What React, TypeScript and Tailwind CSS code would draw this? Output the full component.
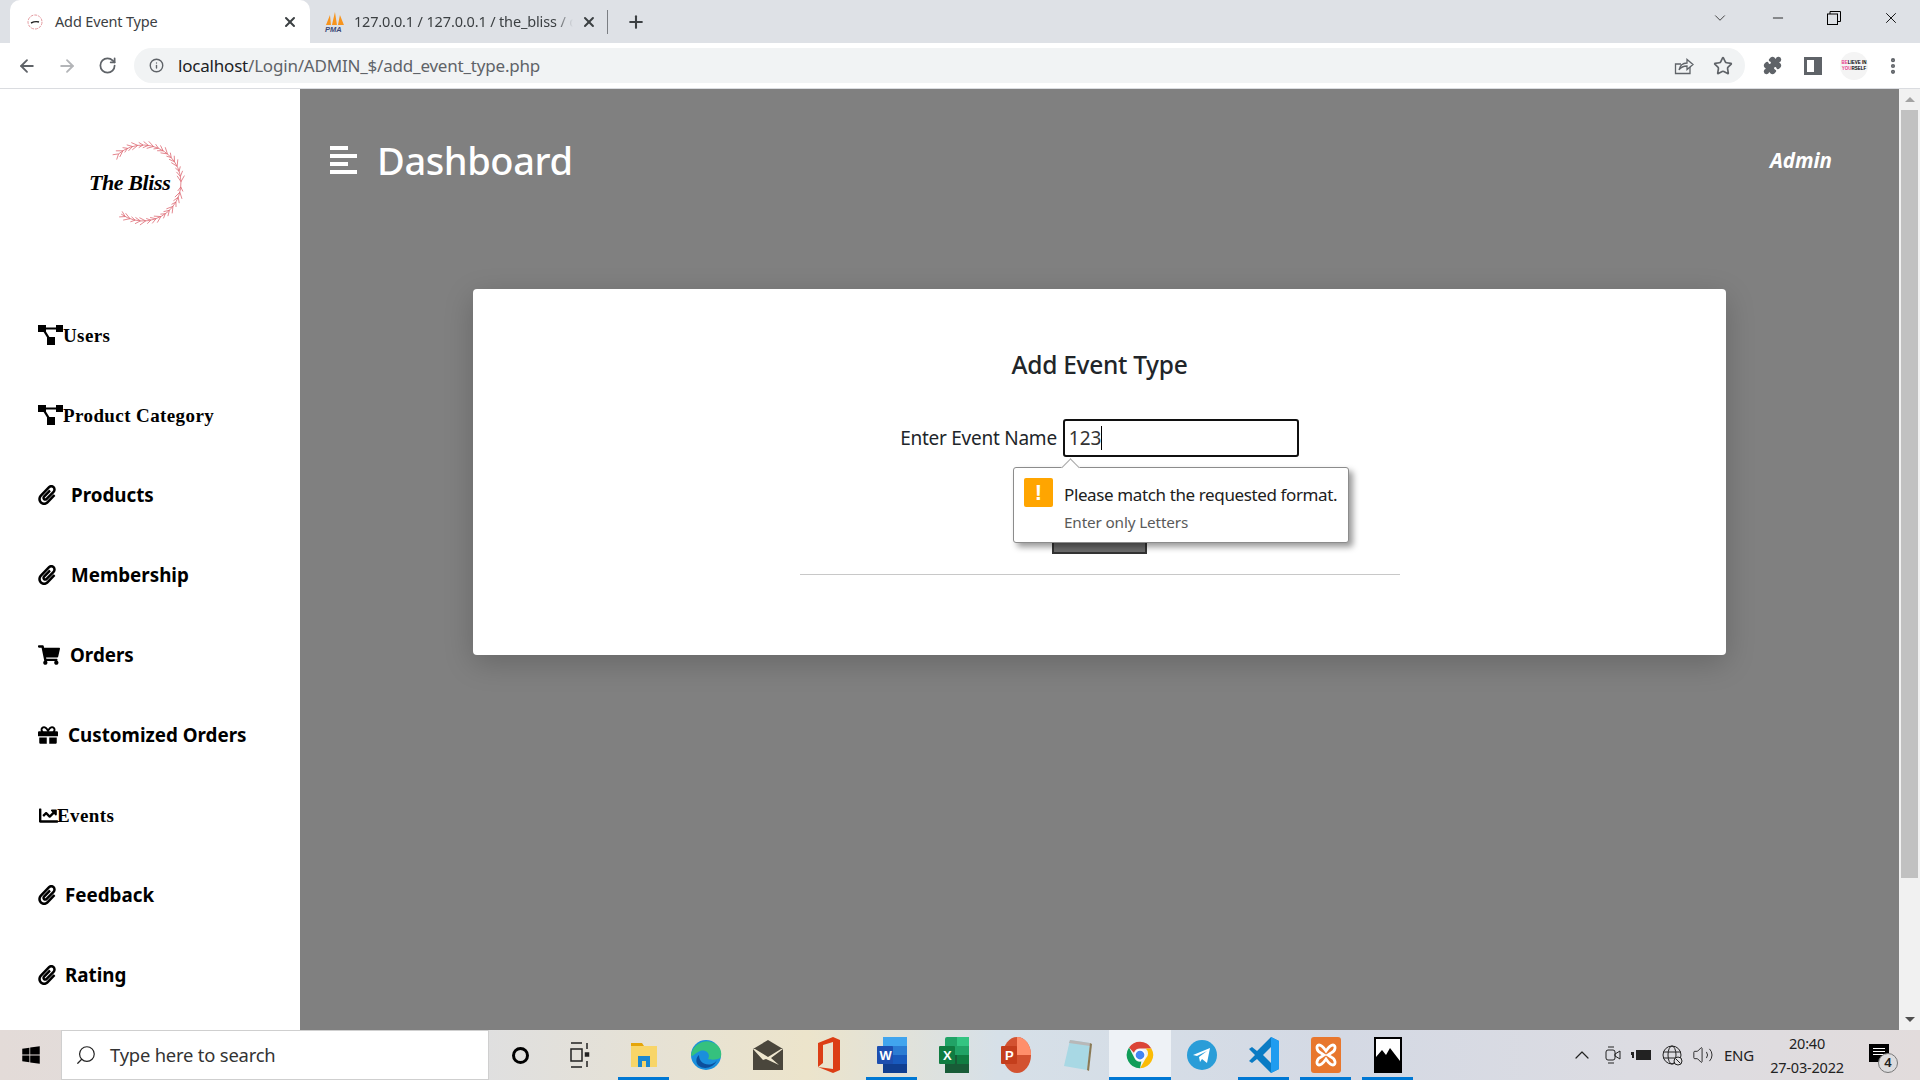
import React from 'react';
import { ArrowLeft, ArrowRight, RotateCw, Info, Star, Plus, X, ChevronDown, ChevronUp, Minus, Search, Puzzle, EllipsisVertical, Volume2 } from 'lucide-react';
import { FaPaperclip, FaShoppingCart, FaGift, FaChartLine, FaWindows } from 'react-icons/fa';

const Sitemap = () => (
  <svg width="26" height="20" viewBox="0 0 26 20" fill="black">
    <rect x="0" y="0" width="8" height="7" />
    <rect x="18" y="0" width="7" height="7" />
    <rect x="9" y="12" width="8" height="8" />
    <path d="M7 2.5h12v2H7zM5 6l2-1 5 8-2 1z" />
  </svg>
);

const Clip = () => <FaPaperclip className="w-[18px] h-[20px] text-black" />;

const serifText = "font-['Liberation_Serif',serif] text-[19px] font-bold tracking-[0.4px] mt-[2px]";

const navItems = [
  { label: 'Users', icon: <Sitemap />, text: serifText, gap: '-ml-px' },
  { label: 'Product Category', icon: <Sitemap />, text: serifText, gap: '-ml-px' },
  { label: 'Products', icon: <Clip />, text: 'text-[18.8px] font-bold', gap: 'ml-[15px]' },
  { label: 'Membership', icon: <Clip />, text: 'text-[18.8px] font-bold', gap: 'ml-[15px]' },
  { label: 'Orders', icon: <FaShoppingCart className="w-[22px] h-[20px] text-black" />, text: 'text-[18.8px] font-bold', gap: 'ml-[10px]' },
  { label: 'Customized Orders', icon: <FaGift className="w-[20px] h-[20px] text-black" />, text: 'text-[18.8px] font-bold', gap: 'ml-[10px]' },
  { label: 'Events', icon: <FaChartLine className="w-[21px] h-[19px] text-black" />, text: serifText, gap: '-ml-[2px]' },
  { label: 'Feedback', icon: <Clip />, text: 'text-[18.8px] font-bold', gap: 'ml-[9px]' },
  { label: 'Rating', icon: <Clip />, text: 'text-[18.8px] font-bold', gap: 'ml-[9px]' },
];

const Wreath = () => {
  const cx = 45, cy = 45, r = 38;
  const leaves = [];
  for (let a = -130; a <= 125; a += 8) {
    const rad = a * Math.PI / 180;
    const x = cx + r * Math.cos(rad);
    const y = cy + r * Math.sin(rad);
    // leaves lean toward the top of the wreath on the upper half, the bottom on the lower half
    const dir = a < 0 ? -1 : 1;
    for (const s of [-1, 1]) {
      const t = rad + dir * Math.PI / 2 + s * 0.55;
      const len = 5 + (Math.abs(a) % 3);
      leaves.push(<line key={`${a}${s}`} x1={x} y1={y} x2={x + len * Math.cos(t)} y2={y + len * Math.sin(t)} />);
    }
  }
  const p1 = [cx + r * Math.cos(-130 * Math.PI / 180), cy + r * Math.sin(-130 * Math.PI / 180)];
  const p2 = [cx + r * Math.cos(125 * Math.PI / 180), cy + r * Math.sin(125 * Math.PI / 180)];
  return (
    <svg width="90" height="90" viewBox="0 0 90 90" fill="none" stroke="#dd6a74" strokeWidth="0.8">
      <path d={`M${p1[0]} ${p1[1]}A${r} ${r} 0 1 1 ${p2[0]} ${p2[1]}`} />
      {leaves}
    </svg>
  );
};

const Logo = () => (
  <div className="relative w-[100px] h-[92px] ml-[89px]">
    <div className="absolute left-[9px] top-0"><Wreath /></div>
    <span className="absolute left-0 top-[27px] font-['Liberation_Serif',serif] italic font-bold text-[22px] leading-[36px] text-black whitespace-nowrap tracking-[-0.4px]">The Bliss</span>
  </div>
);

const PmaIcon = () => (
  <svg width="22" height="22" viewBox="0 0 22 22">
    <path d="M2 14L6 4l1 10zM8 14l3-13 2 13zM14 14l2-10 4 10z" fill="#f7941d" />
    <text x="1" y="21" fontSize="7.5" fontWeight="700" fontStyle="italic" fill="#3b4a78" fontFamily="Liberation Sans">PMA</text>
  </svg>
);

const TabFav = () => (
  <svg width="18" height="18" viewBox="0 0 18 18" fill="none">
    <circle cx="9" cy="9" r="7" stroke="#e49a9f" strokeWidth="1" strokeDasharray="3 1" />
    <path d="M5 10c2-1 5-2 8-1" stroke="#222" strokeWidth="1.4" />
  </svg>
);

const ShareIcon = () => (
  <svg width="20" height="20" viewBox="0 0 20 20" fill="none" stroke="#5f6368" strokeWidth="1.3">
    <path d="M16 11v6.5H1.5V8H7" />
    <path d="M5 14c1-5 4-7 8-7V3.5l6 5-6 5V10c-3 0-6 1-8 4z" />
  </svg>
);

const Panel = () => (
  <div className="w-[18px] h-[18px] bg-[#5f6368] flex justify-start p-[3px_8px_3px_3px]">
    <div className="w-full h-full bg-white" />
  </div>
);

const Restore = () => (
  <svg width="14" height="14" viewBox="0 0 14 14" fill="none" stroke="black" strokeWidth="1">
    <rect x="0.5" y="3" width="10" height="10.5" />
    <path d="M3 3V0.5h10.5v10H11" />
  </svg>
);

const TabBar = () => (
  <div className="h-[43px] bg-[#dee1e6] flex items-end text-[14px] text-[#3c4043] shrink-0">
    <div className="w-[10px]" />
    <div className="w-[300px] h-[43px] bg-white rounded-t-[10px] flex items-center">
      <div className="w-[45px] pl-[16px] flex"><TabFav /></div>
      <span className="flex-1 text-[14.500px] tracking-[-0.15px]">Add Event Type</span>
      <X className="w-[16px] h-[16px] text-[#3c4043] mr-[12px]" strokeWidth={3} />
    </div>
    <div className="w-[298px] h-[43px] flex items-center pl-[14px]">
      <PmaIcon />
      <span className="ml-[8px] w-[220px] overflow-hidden whitespace-nowrap text-[14.500px] tracking-[-0.15px] [mask-image:linear-gradient(90deg,black_92%,transparent)]">127.0.0.1 / 127.0.0.1 / the_bliss / c</span>
      <X className="w-[16px] h-[16px] text-[#3c4043] ml-[8px]" strokeWidth={3} />
      <div className="w-px h-[24px] bg-[#7b7e83] ml-[10px]" />
    </div>
    <div className="h-[43px] flex items-center ml-[18px]">
      <Plus className="w-[20px] h-[20px] text-[#3c4043]" strokeWidth={2.5} />
    </div>
    <div className="flex-1" />
    <div className="h-[36px] flex items-center self-start">
      <ChevronDown className="w-[18px] h-[18px] text-[#333] mr-[41px]" strokeWidth={1.2} />
      <Minus className="w-[16px] h-[16px] text-black mr-[41px]" strokeWidth={1.2} />
      <Restore />
      <X className="w-[18px] h-[18px] text-black ml-[41px] mr-[20px]" strokeWidth={1.2} />
    </div>
  </div>
);

const Toolbar = () => (
  <div className="h-[46px] bg-white border-b border-[#dadce0] flex items-center shrink-0">
    <ArrowLeft className="w-[20px] h-[20px] text-[#5f6368] ml-[17px]" strokeWidth={2.2} />
    <ArrowRight className="w-[20px] h-[20px] text-[#b3b5b8] ml-[20px]" strokeWidth={2.2} />
    <RotateCw className="w-[19px] h-[19px] text-[#5f6368] ml-[21px]" strokeWidth={2.2} />
    <div className="ml-[17px] w-[1611px] h-[35px] rounded-full bg-[#f1f3f4] flex items-center">
      <Info className="w-[15px] h-[15px] text-[#5f6368] ml-[15px]" strokeWidth={2.2} />
      <span className="ml-[14px] text-[17px] text-[#5f6368] tracking-[-0.2px]"><span className="text-[#202124]">localhost</span>/Login/ADMIN_$/add_event_type.php</span>
      <div className="flex-1" />
      <ShareIcon />
      <Star className="w-[20px] h-[20px] text-[#5f6368] ml-[19px] mr-[12px]" strokeWidth={2} />
    </div>
    <ExtensionIcon />
    <div className="ml-[22px]"><Panel /></div>
    <div className="ml-[18px] w-[28px] h-[28px] rounded-full bg-[#f4f4f4] flex items-center justify-center">
      <span className="font-['Liberation_Sans',sans-serif] text-[4.500px] leading-[6px] font-bold text-black whitespace-nowrap text-center"><span className="text-[#e8408f]">BE</span>LIEVE IN<br /><span className="text-[#e8408f]">YOU</span>RSELF</span>
    </div>
    <EllipsisVertical className="w-[20px] h-[20px] text-[#5f6368] ml-[15px]" strokeWidth={3} />
  </div>
);

const ExtensionIcon = () => <Puzzle className="w-[19px] h-[19px] text-[#5f6368] fill-[#5f6368] ml-[18px]" />;

const Sidebar = () => (
  <div className="w-[300px] bg-white flex flex-col shrink-0">
    <div className="h-[206px] pt-[49px]"><Logo /></div>
    {navItems.map((item, index) => (
      <div key={index} className="h-[80px] flex items-center pl-[38px] text-black">
        {item.icon}
        <span className={`${item.gap} ${item.text}`}>{item.label}</span>
      </div>
    ))}
  </div>
);

const ValidationBubble = () => (
  <div className="absolute left-[540px] top-[178px] w-[336px] h-[76px] bg-white border border-[#8c8c8c] rounded-[3px] shadow-[4px_4px_6px_rgba(0,0,0,0.4)] flex">
    <div className="absolute left-[50px] -top-[7px] w-[13px] h-[13px] bg-white border-l border-t border-[#a8a8a8] rotate-45" />
    <div className="ml-[10px] mt-[10px] w-[29px] h-[29px] bg-[#ffa500] rounded-[2px] flex items-center justify-center text-white font-bold text-[22px] font-['Liberation_Sans',sans-serif]">!</div>
    <div className="ml-[11px] flex flex-col">
      <span className="mt-[14px] text-[17px] leading-[26px] text-[#202020] tracking-[-0.38px] whitespace-nowrap">Please match the requested format.</span>
      <span className="mt-[4px] text-[15.300px] leading-[20px] text-[#5a5a5a] tracking-[-0.15px]">Enter only Letters</span>
    </div>
  </div>
);

const Main = () => (
  <div className="flex-1 bg-[#808080] flex flex-col text-white">
    <div className="h-[200px] flex items-start">
      <svg className="ml-[30px] mt-[57px]" width="27" height="28" viewBox="0 0 27 28" fill="white">
        <rect x="0" y="0" width="18" height="4" />
        <rect x="0" y="8" width="27" height="4" />
        <rect x="0" y="16" width="18" height="4" />
        <rect x="0" y="24" width="27" height="4" />
      </svg>
      <h1 className="ml-[20px] mt-[46px] text-[38px] leading-[50px] font-medium tracking-[-0.4px]">Dashboard</h1>
      <div className="flex-1" />
      <span className="mt-[58px] mr-[67px] text-[20.500px] leading-[27px] font-bold italic">Admin</span>
    </div>
    <div className="relative mx-[173px] h-[366px] bg-white rounded-[4px] shadow-[0_8px_30px_rgba(0,0,0,0.2)] flex flex-col items-center pt-[58px] text-[#212529]">
      <h2 className="h-[36px] text-[24.500px] leading-[36px] font-medium tracking-[-0.3px]">Add Event Type</h2>
      <div className="mt-[36px] flex items-center">
        <label className="text-[19px] tracking-[-0.25px] mr-[6px] mt-[1px]">Enter Event Name</label>
        <div className="w-[236px] h-[38px] border-2 border-[#101010] rounded-[3px] flex items-center pl-[4px] text-[19px] text-[#333]">
          123<span className="w-px h-[24px] bg-black" />
        </div>
      </div>
      <div className="mt-[59px] w-[95px] h-[38px] bg-[#6c6c6c] border-2 border-[#333]" />
      <div className="mt-[20px] w-[600px] h-px bg-[#c8c8c8]" />
      <ValidationBubble />
    </div>
  </div>
);

const Scrollbar = () => (
  <div className="w-[21px] bg-[#f1f1f1] flex flex-col items-center shrink-0">
    <div className="h-[21px] flex items-center justify-center"><div className="w-0 h-0 border-x-[5px] border-x-transparent border-b-[5px] border-b-[#a3a3a3]" /></div>
    <div className="w-[17px] h-[768px] bg-[#c1c1c1]" />
    <div className="flex-1" />
    <div className="h-[21px] flex items-center justify-center"><div className="w-0 h-0 border-x-[5px] border-x-transparent border-t-[5px] border-t-[#505050]" /></div>
  </div>
);

const Explorer = () => (
  <svg width="28" height="28" viewBox="0 0 28 28">
    <path d="M1 2h11l2 3H1z" fill="#e5a50a" />
    <rect x="1" y="5" width="26" height="21" fill="#f8d568" />
    <path d="M8 26V15h12v11h-4v-6h-4v6z" fill="#1a87d0" />
  </svg>
);
const Edge = () => (
  <svg width="32" height="32" viewBox="0 0 32 32">
    <circle cx="16" cy="16" r="15" fill="#1a8fdc" />
    <path d="M1 16C3 4 17-2 27 6c5 4 5 11 3 13-3 2-9 2-12 1 3-5-2-10-8-8-5 2-8 7-9 4z" fill="#35c17e" />
    <path d="M9 16c0 7 6 11 13 9 2-1 4-2 5-4-3 8-13 10-18 6-4-3-3-9 0-11z" fill="#0c4f9c" />
  </svg>
);
const Mail = () => (
  <svg width="30" height="32" viewBox="0 0 30 32">
    <path d="M15 1l15 9v21H0V10z" fill="#4a463c" />
    <path d="M0 10h2l13 8 13-8h2l-12 9 8 7-13-6-3 1z" fill="#efe7cf" />
  </svg>
);
const Office = () => (
  <svg width="24" height="36" viewBox="0 0 24 36">
    <path d="M0 6L15 0l7 3v30l-7 3-15-6 15 2V5L5 8v18l-5 4z" fill="#dc3e15" />
  </svg>
);
const Word = () => (
  <svg width="30" height="36" viewBox="0 0 30 36">
    <rect x="6" y="0" width="24" height="36" rx="2" fill="#2b7cd3" />
    <rect x="6" y="0" width="24" height="9" fill="#41a5ee" />
    <rect x="6" y="18" width="24" height="9" fill="#185abd" />
    <rect x="6" y="27" width="24" height="9" fill="#103f91" />
    <rect x="0" y="9" width="16" height="18" rx="1" fill="#1d4fb0" />
    <text x="2.5" y="23" fontSize="13" fontWeight="700" fill="white" fontFamily="Liberation Sans">W</text>
  </svg>
);
const Excel = () => (
  <svg width="30" height="36" viewBox="0 0 30 36">
    <rect x="6" y="0" width="24" height="36" rx="2" fill="#21a366" />
    <rect x="18" y="0" width="12" height="9" fill="#33c481" />
    <rect x="18" y="18" width="12" height="9" fill="#107c41" />
    <rect x="6" y="18" width="12" height="18" fill="#185c37" />
    <rect x="18" y="27" width="12" height="9" fill="#185c37" />
    <rect x="0" y="9" width="16" height="18" rx="1" fill="#107c41" />
    <text x="4" y="23" fontSize="13" fontWeight="700" fill="white" fontFamily="Liberation Sans">X</text>
  </svg>
);
const Ppt = () => (
  <svg width="30" height="36" viewBox="0 0 30 36">
    <ellipse cx="16" cy="18" rx="14" ry="18" fill="#d35230" />
    <path d="M16 0c8 0 14 8 14 18H16z" fill="#ff8f6b" />
    <rect x="0" y="9" width="16" height="18" rx="1" fill="#c43e1c" />
    <text x="4" y="23" fontSize="13" fontWeight="700" fill="white" fontFamily="Liberation Sans">P</text>
  </svg>
);
const Notepad = () => (
  <svg width="28" height="34" viewBox="0 0 28 34">
    <path d="M6 2l20 3-3 27L0 28z" fill="#a8d8e4" />
    <path d="M6 2l20 3v3L5 5z" fill="#b8b8b8" />
    <path d="M26 5l2 1-3 27-2-1z" fill="#8a7a55" />
  </svg>
);
const Chrome = () => (
  <svg width="28" height="36" viewBox="0 0 32 32">
    <path d="M16 1a15 15 0 0 1 13 7.500H16a7.500 7.500 0 0 0-7 5L3.500 7.500A15 15 0 0 1 16 1z" fill="#db4437" />
    <path d="M29 8.500A15 15 0 0 1 16 31l6.500-11a7.500 7.500 0 0 0 0-11.500z" fill="#fbbc05" />
    <path d="M16 31A15 15 0 0 1 3.500 7.500L9.500 19a7.500 7.500 0 0 0 8 4.500z" fill="#0f9d58" />
    <circle cx="16" cy="16" r="6.500" fill="white" />
    <circle cx="16" cy="16" r="5" fill="#4285f4" />
  </svg>
);
const Telegram = () => (
  <svg width="30" height="34" viewBox="0 0 30 30">
    <circle cx="15" cy="15" r="15" fill="#2a9dd8" />
    <path d="M6 15l17-7-3 15-5-4-2 3-1-5 8-6-10 5z" fill="white" />
  </svg>
);
const VsCode = () => (
  <svg width="30" height="36" viewBox="0 0 30 36">
    <path d="M22 0l8 4v28l-8 4-14-14-5 4-3-2 6-6-6-6 3-2 5 4zM22 10l-8 8 8 8z" fill="#0a7bc4" />
    <path d="M22 0l8 4v28l-8 4z" fill="#1f9cf0" />
  </svg>
);
const Xampp = () => (
  <svg width="30" height="36" viewBox="0 0 30 36">
    <rect width="30" height="36" rx="3" fill="#e8772e" />
    <path d="M8 8c-3 0-3 6 2 8l3 2-3 2c-5 2-5 8-2 8s5-3 7-6c2 3 4 6 7 6s3-6-2-8l-3-2 3-2c5-2 5-8 2-8s-5 3-7 6c-2-3-4-6-7-6z" fill="none" stroke="white" strokeWidth="2.800" />
  </svg>
);
const Photos = () => (
  <svg width="28" height="36" viewBox="0 0 28 36">
    <rect x="1" y="1" width="26" height="34" fill="white" stroke="black" strokeWidth="2" />
    <path d="M2 34V20l6-7 4 5 4-7 10 13v10z" fill="black" />
  </svg>
);

const taskIcons = [
  { icon: <div className="w-[17px] h-[17px] rounded-full border-[3px] border-black" />, bar: false },
  {
    icon: (
      <svg className="-ml-[4px]" width="20" height="28" viewBox="0 0 20 28" fill="none" stroke="#222" strokeWidth="1.500">
        <path d="M1 2h11M1 26h11M1 8h11v12H1zM17 2v6M17 20v6" />
        <rect x="15.500" y="12" width="3" height="3" fill="#222" />
      </svg>
    ),
    bar: false,
  },
  { icon: <Explorer />, bar: true },
  { icon: <Edge />, bar: false },
  { icon: <Mail />, bar: false },
  { icon: <Office />, bar: false },
  { icon: <Word />, bar: true },
  { icon: <Excel />, bar: false },
  { icon: <Ppt />, bar: false },
  { icon: <Notepad />, bar: false },
  { icon: <Chrome />, bar: true, active: true },
  { icon: <Telegram />, bar: false },
  { icon: <VsCode />, bar: true },
  { icon: <Xampp />, bar: true },
  { icon: <Photos />, bar: true },
];

const Taskbar = () => (
  <div className="h-[50px] shrink-0 flex items-stretch bg-[linear-gradient(90deg,#e3dbd8_0%,#dfdfe0_25%,#ece4cb_42%,#d6e0e8_52%,#d4d9e4_70%,#dcdce2_85%,#e2dcdc_100%)] text-[#222]">
    <div className="w-[61px] flex items-center justify-center"><FaWindows className="w-[20px] h-[20px] text-black" /></div>
    <div className="w-[428px] bg-white border border-[#cfcfcf] flex items-center pl-[13px]">
      <Search className="w-[22px] h-[22px] text-[#222] -scale-x-100" strokeWidth={1.3} />
      <span className="ml-[13px] text-[18.400px] tracking-[-0.2px] text-[#333]">Type here to search</span>
    </div>
    {taskIcons.map((t, i) => (
      <div key={i} className={`w-[62px] relative flex items-center justify-center ${t.active ? 'bg-[#eef2f6]' : ''}`}>
        {t.icon}
        {t.bar && <div className={`absolute bottom-0 h-[3px] bg-[#0078d4] ${t.active ? 'left-0 right-0' : 'left-[5px] right-[6px]'}`} />}
      </div>
    ))}
    <div className="flex-1" />
    <div className="flex items-center">
      <ChevronUp className="w-[24px] h-[24px] text-[#222] mr-[11px]" strokeWidth={1.2} />
      <svg className="mr-[10px]" width="16" height="20" viewBox="0 0 16 20" fill="none" stroke="#222" strokeWidth="1">
        <rect x="1" y="5" width="9" height="10" rx="2" />
        <path d="M10 9l5-3v8l-5-3zM3 2h6M3 18h6" />
      </svg>
      <svg className="mr-[11px]" width="20" height="14" viewBox="0 0 20 14">
        <rect x="5" y="2" width="15" height="10" fill="#222" />
        <path d="M0 4h3v3H0zM1 7h2v3H1z" fill="#222" />
      </svg>
      <svg className="mr-[9px]" width="21" height="21" viewBox="0 0 21 21" fill="none" stroke="#222" strokeWidth="1">
        <circle cx="10" cy="10" r="9" />
        <ellipse cx="10" cy="10" rx="4" ry="9" />
        <path d="M1 7h18M1 13h18" />
        <circle cx="16" cy="16" r="4" fill="#e0dfe2" />
        <path d="M13.500 13.500l5 5" />
      </svg>
      <Volume2 className="w-[22px] h-[22px] text-[#222] mr-[10px]" strokeWidth={1} />
      <span className="text-[15px] tracking-[-0.2px] mr-[15px]">ENG</span>
      <div className="w-[76px] flex flex-col items-center text-[14.500px] leading-[24px] tracking-[-0.2px]">
        <span>20:40</span>
        <span>27-03-2022</span>
      </div>
      <div className="relative w-[20px] h-[18px] bg-black ml-[24px] mr-[31px] -mt-[4px] flex flex-col gap-[2px] p-[4px]">
        <div className="h-px bg-white" />
        <div className="h-px bg-white" />
        <div className="h-px bg-white" />
        <div className="absolute left-[9px] top-[9px] w-[20px] h-[20px] rounded-full bg-[#dcdcde] border border-[#777] flex items-center justify-center text-[13px] font-semibold text-[#222]">4</div>
      </div>
    </div>
  </div>
);

const App: React.FC = () => {
  return (
    <div className="w-[1920px] h-[1080px] overflow-hidden flex flex-col font-['Noto_Sans',sans-serif]">
      <TabBar />
      <Toolbar />
      <div className="flex-1 flex min-h-0">
        <Sidebar />
        <Main />
        <Scrollbar />
      </div>
      <Taskbar />
    </div>
  );
};

export default App;
